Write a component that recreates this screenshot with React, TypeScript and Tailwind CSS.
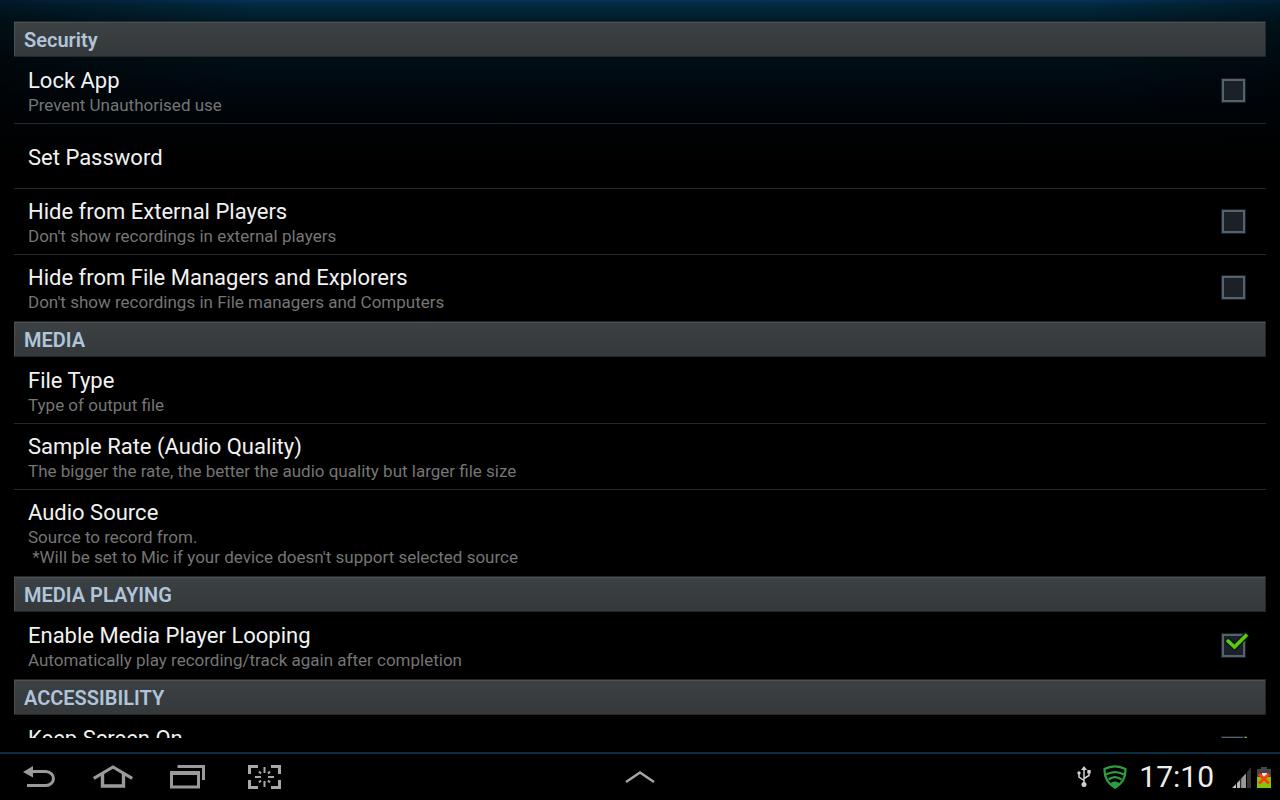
import { useState } from "react";

interface Preference {
  id: string;
  title: string;
  summary?: string[];
  checkbox?: boolean;
}

interface Category {
  title: string;
  items: Preference[];
}

const categories: Category[] = [
  {
    title: "Security",
    items: [
      { id: "lock", title: "Lock App", summary: ["Prevent Unauthorised use"], checkbox: true },
      { id: "password", title: "Set Password" },
      {
        id: "hide-players",
        title: "Hide from External Players",
        summary: ["Don't show recordings in external players"],
        checkbox: true,
      },
      {
        id: "hide-files",
        title: "Hide from File Managers and Explorers",
        summary: ["Don't show recordings in File managers and Computers"],
        checkbox: true,
      },
    ],
  },
  {
    title: "MEDIA",
    items: [
      { id: "file-type", title: "File Type", summary: ["Type of output file"] },
      {
        id: "sample-rate",
        title: "Sample Rate (Audio Quality)",
        summary: ["The bigger the rate, the better the audio quality but larger file size"],
      },
      {
        id: "audio-source",
        title: "Audio Source",
        summary: [
          "Source to record from.",
          " *Will be set to Mic if your device doesn't support selected source",
        ],
      },
    ],
  },
  {
    title: "MEDIA PLAYING",
    items: [
      {
        id: "looping",
        title: "Enable Media Player Looping",
        summary: ["Automatically play recording/track again after completion"],
        checkbox: true,
      },
    ],
  },
  {
    title: "ACCESSIBILITY",
    items: [{ id: "screen-on", title: "Keep Screen On", summary: [" "], checkbox: true }],
  },
];

function CategoryHeader({ title }: { title: string }) {
  return (
    <h2 className="mb-px flex h-9 items-center border-y border-r border-[#24282a] bg-linear-to-b from-[#3c4144] to-[#34383b] px-2.5 pt-px text-[20px] leading-7 font-semibold text-[#b0c4da] shadow-[inset_1px_1px_0_#4b5053]">
      {title}
    </h2>
  );
}

interface RowProps {
  item: Preference;
  last: boolean;
  checked: boolean;
  onToggle: (id: string) => void;
}

function PreferenceRow({ item, last, checked, onToggle }: RowProps) {
  const text = (
    <span className="min-w-0 flex-1">
      <span className="block text-[22px] leading-[29px] text-[#f2f2f2]">{item.title}</span>
      {item.summary?.map((line) => (
        <span key={line} className="block text-[17px] leading-5 whitespace-pre-wrap text-[#757575]">
          {line}
        </span>
      ))}
    </span>
  );
  const rowClass = `flex w-full items-center border-b pr-5 pl-3.5 text-left ${
    item.summary ? "py-2" : "h-[65px] pt-[3px]"
  } ${last ? "border-transparent" : "border-[#25282a]"}`;

  if (!item.checkbox) {
    return (
      <button type="button" className={rowClass}>
        {text}
      </button>
    );
  }

  return (
    <label htmlFor={item.id} className={rowClass}>
      {text}
      <span className="relative flex size-[25px]">
        <input
          id={item.id}
          type="checkbox"
          checked={checked}
          onChange={() => onToggle(item.id)}
          className="size-[25px] appearance-none border border-[#1b2227] bg-[#1b2126] shadow-[inset_0_0_0_2px_#53636e]"
        />
        {checked ? (
          <svg
            viewBox="0 0 28 28"
            fill="none"
            className="pointer-events-none absolute left-0 -top-px size-7"
          >
            <path d="M5.500 7.500l8 7.500L26.500 2" stroke="#0c1214" strokeWidth="6" />
            <path d="M6 8l7.500 7L26 2.500" stroke="#55cf0d" strokeWidth="3.600" />
          </svg>
        ) : null}
      </span>
    </label>
  );
}

function BackIcon() {
  return (
    <svg viewBox="0 0 34 24" className="h-6 w-[34px]" fill="none">
      <path d="M0 7L10 1v11.500z" fill="#9a9a9a" />
      <path d="M9 6.500h14c4 0 7.500 3.300 7.500 7s-3.500 7-7.500 7H4" stroke="#9a9a9a" strokeWidth="3" />
    </svg>
  );
}

function HomeIcon() {
  return (
    <svg viewBox="0 0 40 24" className="h-6 w-10" fill="none" stroke="#9a9a9a">
      <path d="M.8 13.500L20 2l19.200 11.500" strokeWidth="3.200" />
      <path d="M9.500 9v12h21V9" strokeWidth="3.400" />
    </svg>
  );
}

function RecentIcon() {
  return (
    <svg viewBox="0 0 36 24" className="h-6 w-9" fill="none" stroke="#9a9a9a">
      <path d="M7.500 1.500h26v13.500" strokeWidth="3" />
      <path d="M1.500 8h27v14h-27z" strokeWidth="3" />
      <path d="M0 8h30" strokeWidth="4" />
    </svg>
  );
}

function ScreenshotIcon() {
  return (
    <svg viewBox="0 0 34 24" className="h-6 w-[34px]" fill="none" stroke="#a8a8a8">
      <path
        d="M10 1.500H1.500V9M23 1.500h8.500V9M10 22.500H1.500V15M23 22.500h8.500V15"
        strokeWidth="3"
      />
      <path
        d="M16.500 2v6M16.500 16v6M7 12h6M20 12h6M11 6.500l2 2M22 6.500l-2 2M11 17.500l2-2M22 17.500l-2-2"
        strokeWidth="2"
      />
    </svg>
  );
}

function UsbIcon() {
  return (
    <svg viewBox="0 0 14 22" className="h-[22px] w-3.5" fill="none" stroke="#d0d0d0" strokeWidth="1.500">
      <path d="M7 3v15M7 14.500l-5-3.500V7M7 12.500l5-3V6" />
      <path d="M7 0l3 4H4z" fill="#d0d0d0" stroke="none" />
      <circle cx="7" cy="18.500" r="2.500" fill="#d0d0d0" stroke="none" />
      <circle cx="2" cy="7" r="1.700" fill="#d0d0d0" stroke="none" />
      <path d="M10.300 4h3.400v3.500h-3.400z" fill="#d0d0d0" stroke="none" />
    </svg>
  );
}

function ShieldIcon() {
  return (
    <svg viewBox="0 0 24 24" className="size-6" fill="none" stroke="#2f9e41" strokeWidth="2.200">
      <path d="M1.500 4C8 .7 16 .7 22.500 4c.3 8-3 14.500-10.500 18.700C4.500 18.500 1.200 12 1.500 4z" />
      <path d="M3 9.500c5.500-3 12.500-3 18 0M5.500 14.500c4-3 9-3 13 0" />
      <path d="M8 18.500c2-2 6-2 8 0L12 22.500z" fill="#2f9e41" strokeWidth="1" />
    </svg>
  );
}

function SignalIcon() {
  return (
    <svg viewBox="0 0 20 21" className="h-[21px] w-5">
      <path d="M0 21l4-4v4z" fill="#c4c4c4" />
      <path d="M5 16l3-3v8H5z" fill="#b5b5b5" />
      <path d="M9 12l4-4.500V21H9z" fill="#a8a8a8" />
      <path d="M10 11l4-4.500V21h-4z" fill="#999" />
      <path d="M9 12v9" stroke="#5a5a5a" />
      <path d="M15 5l4-5v21h-4z" fill="#353535" />
    </svg>
  );
}

function BatteryIcon() {
  return (
    <svg viewBox="0 0 14 21" className="h-[21px] w-3.5">
      <path d="M4 0h6v2h4v19H0V2h4z" fill="#454545" />
      <path d="M0 10h14v11H0z" fill="#86c800" />
      <path d="M5 6h5v3l-1 3H6L5 9z" fill="#e4e4e4" />
      <path d="M2 7l10 9.500M12 7L2 16.500" stroke="#ff3a10" strokeWidth="3" />
    </svg>
  );
}

function SystemBar() {
  return (
    <footer className="grid h-12 shrink-0 grid-cols-[1fr_auto_1fr] items-center border-t-2 border-[#09303f] bg-black">
      <nav className="flex items-center pl-[23px]">
        <button type="button" aria-label="Back">
          <BackIcon />
        </button>
        <button type="button" aria-label="Home" className="ml-9">
          <HomeIcon />
        </button>
        <button type="button" aria-label="Recent apps" className="ml-[37px]">
          <RecentIcon />
        </button>
        <button type="button" aria-label="Screenshot" className="ml-[42px]">
          <ScreenshotIcon />
        </button>
      </nav>
      <button type="button" aria-label="Open tray">
        <svg viewBox="0 0 30 12" className="h-3 w-[30px]" fill="none">
          <path d="M1 11L15 1.500 29 11" stroke="#a6a6a6" strokeWidth="2.400" />
        </svg>
      </button>
      <div className="flex items-center justify-end pr-[9px]">
        <UsbIcon />
        <span className="ml-3">
          <ShieldIcon />
        </span>
        <time className="ml-3 text-[30px] leading-10 text-[#ededed]">17:10</time>
        <span className="ml-[18px]">
          <SignalIcon />
        </span>
        <span className="ml-[5px]">
          <BatteryIcon />
        </span>
      </div>
    </footer>
  );
}

export default function App() {
  const [enabled, setEnabled] = useState<string[]>(["looping", "screen-on"]);

  const toggle = (id: string) => {
    setEnabled((current) =>
      current.includes(id) ? current.filter((entry) => entry !== id) : [...current, id],
    );
  };

  return (
    <div className="flex h-screen flex-col overflow-hidden bg-black font-[Roboto,sans-serif]">
      <div className="min-h-0 flex-1 bg-[linear-gradient(to_right,rgba(0,0,0,0.45),transparent_20%,transparent_85%,rgba(0,0,0,0.35)),linear-gradient(to_bottom,#05305a_0px,#022a40_4px,#001c2a_20px,#000f17_57px,#00060c_100px,#000_160px)] px-3.5 pb-3.5">
        <main className="h-full overflow-hidden pt-[21px]">
          {categories.map((category) => (
            <section key={category.title}>
              <CategoryHeader title={category.title} />
              {category.items.map((item, index) => (
                <PreferenceRow
                  key={item.id}
                  item={item}
                  last={index === category.items.length - 1}
                  checked={enabled.includes(item.id)}
                  onToggle={toggle}
                />
              ))}
            </section>
          ))}
        </main>
      </div>
      <SystemBar />
    </div>
  );
}
